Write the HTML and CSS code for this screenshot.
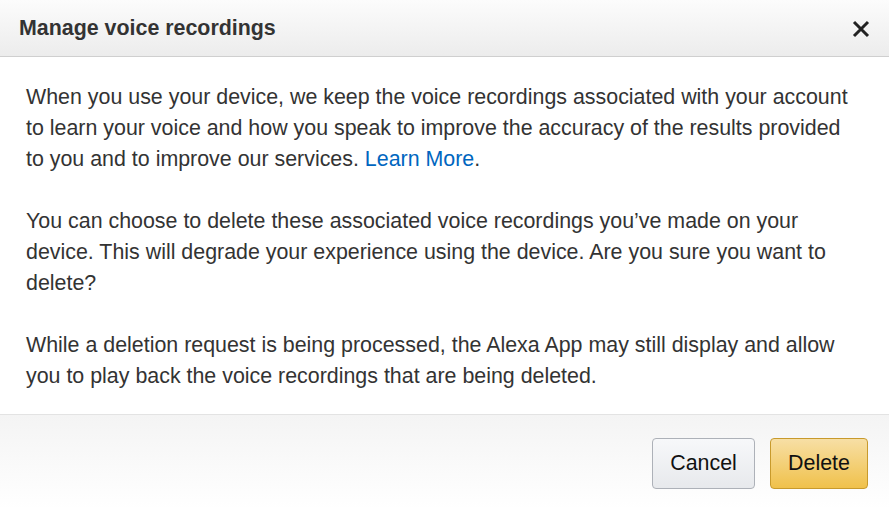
FILE: index.html
```html
<!DOCTYPE html>
<html>
<head>
<meta charset="utf-8">
<link rel="stylesheet" href="styles.css">
</head>
<body>
<div class="modal">
  <div class="header">
    <h2 class="title">Manage voice recordings</h2>
    <button class="close" aria-label="Close">
      <svg width="18" height="18" viewBox="0 0 18 18"><path d="M2 2 L16 16 M16 2 L2 16" stroke="#222" stroke-width="3" stroke-linecap="butt"/></svg>
    </button>
  </div>
  <div class="content">
    <p>When you use your device, we keep the voice recordings associated with your account to learn your voice and how you speak to improve the accuracy of the results provided to you and to improve our services. <a href="#" class="link">Learn More</a>.</p>
    <p>You can choose to delete these associated voice recordings you’ve made on your device. This will degrade your experience using the device. Are you sure you want to delete?</p>
    <p>While a deletion request is being processed, the Alexa App may still display and allow you to play back the voice recordings that are being deleted.</p>
  </div>
  <div class="footer">
    <button class="btn btn-cancel">Cancel</button>
    <button class="btn btn-delete">Delete</button>
  </div>
</div>
</body>
</html>
```
FILE: styles.css
```css
html, body {
  margin: 0;
  padding: 0;
  background: #fff;
}
body {
  font-family: "Liberation Sans", Arial, sans-serif;
  color: #333;
  width: 889px;
  height: 509px;
  overflow: hidden;
}
.modal {
  display: flex;
  flex-direction: column;
  height: 509px;
}
.header {
  height: 57px;
  box-sizing: border-box;
  display: flex;
  align-items: center;
  justify-content: space-between;
  padding: 0 19px 0 19px;
  background: linear-gradient(#fcfcfc, #ececec);
  border-bottom: 1px solid #cfcfcf;
  flex: none;
}
.title {
  margin: 0;
  font-size: 21.4px;
  font-weight: bold;
  color: #333;
}
.close {
  background: none;
  border: 0;
  padding: 0;
  width: 18px;
  height: 18px;
  display: flex;
  margin-top: 2px;
}
.content {
  padding: 25px 26px 22px 26px;
  font-size: 21.4px;
  line-height: 31px;
  flex: none;
  border-bottom: 1px solid #e3e3e3;
}
.content p {
  margin: 0 0 31px 0;
}
.content p:last-child {
  margin-bottom: 0;
}
.link {
  color: #0066c0;
  text-decoration: none;
}
.footer {
  flex: 1;
  display: flex;
  justify-content: flex-end;
  align-items: flex-start;
  gap: 15px;
  padding: 23px 21px 0 0;
  background: linear-gradient(#f4f4f4, #ffffff);
}
.btn {
  height: 51px;
  box-sizing: border-box;
  font-family: "Liberation Sans", Arial, sans-serif;
  font-size: 21.4px;
  color: #111;
  border-radius: 4px;
  padding: 0;
  cursor: pointer;
}
.btn-cancel {
  width: 103px;
  background: linear-gradient(#f7f8fa, #e7e9ec);
  border: 1px solid #adb1b8;
}
.btn-delete {
  width: 98px;
  background: linear-gradient(#f7dfa5, #f0c14b);
  border: 1px solid #c89a2c;
}
```
